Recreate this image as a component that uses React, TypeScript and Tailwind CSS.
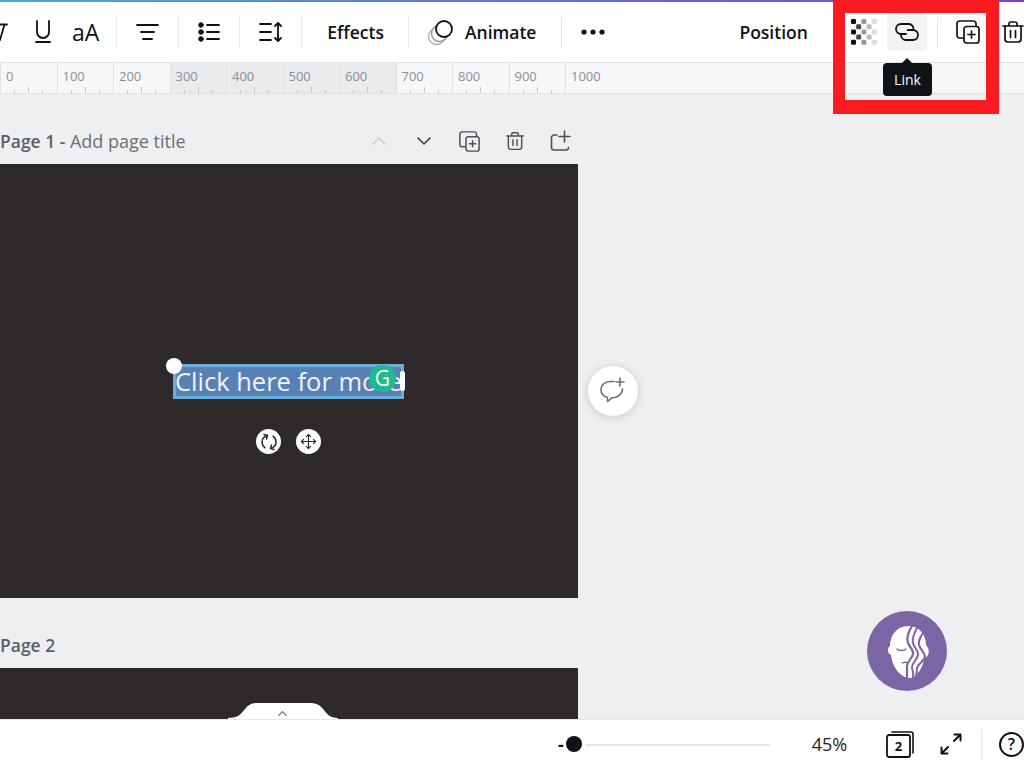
import { ChevronDown, ChevronUp, Move } from 'lucide-react'

const rulerMarks = [0, 100, 200, 300, 400, 500, 600, 700, 800, 900]

function Divider({ className }: { className: string }) {
  return <div className={`h-[31px] w-px shrink-0 bg-[#e6e8ea] ${className}`} />
}

function CopyPlus({ size = 24, color = '#0e1318' }: { size?: number; color?: string }) {
  return (
    <svg width={size} height={size} viewBox="0 0 24 24" fill="none" stroke={color} strokeWidth="1.700" strokeLinecap="round" strokeLinejoin="round">
      <path d="M7 18H3.500A2.500 2.500 0 0 1 1 15.500V3.500A2.500 2.500 0 0 1 3.500 1H17.500A2.500 2.500 0 0 1 20 3.500V6" />
      <rect x="8" y="6.500" width="15" height="16.500" rx="2.500" />
      <path d="M15.500 11v7M12 14.500h7" />
    </svg>
  )
}

function TrashIcon({ size = 24, color = '#0e1318' }: { size?: number; color?: string }) {
  return (
    <svg width={size} height={size} viewBox="0 0 24 24" fill="none" stroke={color} strokeWidth="1.700" strokeLinecap="round" strokeLinejoin="round">
      <path d="M2 6h20M8 6V4a2 2 0 0 1 2-2h4a2 2 0 0 1 2 2v2" />
      <path d="M4 6v13a3 3 0 0 0 3 3h10a3 3 0 0 0 3-3V6" />
      <path d="M9.500 10.500v7M14.500 10.500v7" />
    </svg>
  )
}

function TransparencyIcon() {
  const fills = ['#111', '#444', '#999', '#bbb', '#ddd']
  const dots = []
  for (let row = 0; row < 5; row++) {
    for (let col = 0; col < 5; col++) {
      if ((row + col) % 2 === 0) {
        dots.push(<rect key={`${row}-${col}`} x={col * 5.200} y={row * 5.200} width="5" height="5" rx="1.300" fill={fills[col]} />)
      }
    }
  }
  return <svg className="block" width="26" height="26" viewBox="0 0 26 26">{dots}</svg>
}

function FaceLogo() {
  return (
    <svg className="block" width="80" height="80" viewBox="0 0 80 80">
      <path d="M41 15C30 15 23 24 23 35C20 37 20 42 24 44C25 52 29 62 38 66C42 68 47 67 50 63C54 59 56 54 57 48C61 46 63 41 61 37L59 34C59 23 52 15 41 15Z" fill="#fff" />
      <g fill="none" stroke="#7b65a5" strokeLinecap="round">
        <path d="M46 13C41 22 39 27 41 32C43 37 47 39 46 43C45 48 40 50 40 55L40 68" strokeWidth="2.200" />
        <path d="M51 15C47 22 45 27 46 32C47 37 52 40 51 44C50 49 45 52 45 56C45 59 47 61 46 66" strokeWidth="2" />
        <path d="M56 22C53 27 51 30 52 34C53 38 58 42 58 46C57 50 51 53 50 57C50 59 50 61 49 64" strokeWidth="2" />
        <path d="M30 38C32 40 37 40 39 38" strokeWidth="1.300" />
        <path d="M35 52C37 51 39 51 41 52" strokeWidth="1.300" />
      </g>
    </svg>
  )
}

export default function App() {
  return (
    <div className="relative flex h-[768px] w-[1024px] flex-col overflow-hidden bg-[#edeff1] font-['Open_Sans','Noto_Sans',sans-serif] text-[#0e1318]">
      <div className="h-[2px] shrink-0 bg-gradient-to-r from-[#4fa8cf] via-[#5f73d3] to-[#7d3fd8]" />

      {/* toolbar */}
      <header className="relative z-10 flex h-[60px] shrink-0 items-center bg-white">
        <svg className="shrink-0" width="8" height="18" viewBox="0 0 8 18" fill="none" stroke="#0e1318" strokeWidth="1.800" strokeLinecap="round">
          <path d="M0 1.500h7M4.500 1.500L0 17" />
        </svg>
        <svg className="ml-[27px] shrink-0" width="16" height="24" viewBox="0 0 16 24" fill="none" stroke="#0e1318" strokeWidth="1.800" strokeLinecap="round">
          <path d="M2 1v11a6 6 0 0 0 12 0V1M1 22h14" />
        </svg>
        <span className="ml-[21px] text-[23px] leading-none">aA</span>
        <Divider className="ml-[17px]" />
        <svg className="ml-[19px] shrink-0" width="23" height="18" viewBox="0 0 23 18" stroke="#0e1318" strokeWidth="1.800" strokeLinecap="round">
          <path d="M1 2h21M5 9h13M7 16h9" />
        </svg>
        <Divider className="ml-[19px]" />
        <svg className="ml-[19px] shrink-0" width="22" height="20" viewBox="0 0 22 20" fill="#0e1318" stroke="#0e1318" strokeLinecap="round">
          <circle cx="3" cy="3" r="2.300" />
          <circle cx="3" cy="10" r="2.300" />
          <circle cx="3" cy="17" r="2.300" />
          <path d="M9 3h12M9 10h12M9 17h12" strokeWidth="1.800" />
        </svg>
        <Divider className="ml-[19px]" />
        <svg className="ml-[19px] shrink-0" width="24" height="22" viewBox="0 0 24 22" fill="none" stroke="#0e1318" strokeWidth="1.800" strokeLinecap="round" strokeLinejoin="round">
          <path d="M1 3h11M1 11h11M1 19h11M19 2v18M16 5l3-3 3 3M16 17l3 3 3-3" />
        </svg>
        <Divider className="ml-[18px]" />
        <span className="ml-[25px] text-[17.500px] font-semibold">Effects</span>
        <Divider className="ml-[24px]" />
        <svg className="ml-[18px] shrink-0" width="27" height="27" viewBox="0 0 27 27" fill="none">
          <circle cx="9.500" cy="17.500" r="8" stroke="#b5b5b5" strokeWidth="1.500" />
          <circle cx="12.500" cy="14.500" r="8" fill="#fff" stroke="#999" strokeWidth="1.500" />
          <circle cx="17" cy="10" r="8" fill="#fff" stroke="#0e1318" strokeWidth="1.800" />
        </svg>
        <span className="ml-[11px] text-[17.500px] font-semibold">Animate</span>
        <Divider className="ml-[25px]" />
        <svg className="ml-[19px] shrink-0" width="24" height="6" viewBox="0 0 24 6" fill="#0e1318">
          <circle cx="3" cy="3" r="2.600" />
          <circle cx="12" cy="3" r="2.600" />
          <circle cx="21" cy="3" r="2.600" />
        </svg>
        <span className="ml-[134px] w-[71px] text-[17.500px] font-semibold">Position</span>
        <div className="ml-[43px] shrink-0"><TransparencyIcon /></div>
        <div className="ml-[10px] flex h-[38px] w-[40px] shrink-0 items-center justify-center rounded bg-[#f2f3f5]">
          <svg width="26" height="20" viewBox="0 0 26 20" fill="none" stroke="#0e1318" strokeWidth="1.800" strokeLinecap="round">
            <path d="M19.500 7A5 5 0 0 0 15 2H7A5 5 0 0 0 7 12H12" />
            <path d="M7 13A5 5 0 0 0 11.500 18H19A5 5 0 0 0 19 8H13.500" />
          </svg>
        </div>
        <Divider className="ml-[10px]" />
        <div className="ml-[18px] shrink-0"><CopyPlus /></div>
        <div className="ml-[21px] shrink-0"><TrashIcon /></div>
      </header>

      {/* ruler */}
      <div className="flex h-[32px] shrink-0 border-y border-[#e0e2e4] bg-[#f6f7f8] text-[13px] leading-none text-[#8b9095]">
        {rulerMarks.map((mark) => (
          <div
            key={mark}
            className={`relative w-[56.500px] shrink-0 border-l border-[#dfe1e3] pt-[7px] pl-[5px] ${mark >= 300 && mark <= 600 ? 'bg-[#e9ebed]' : ''}`}
          >
            {mark}
            <div className="absolute right-0 bottom-0 left-0 flex h-[7px] items-end justify-around px-[7px]">
              <span className="h-[3px] w-px bg-[#c4c7ca]" />
              <span className="h-[6px] w-px bg-[#c4c7ca]" />
              <span className="h-[3px] w-px bg-[#c4c7ca]" />
            </div>
          </div>
        ))}
        <div className="flex-1 border-l border-[#dfe1e3] pt-[7px] pl-[5px]">1000</div>
      </div>

      {/* canvas */}
      <main className="relative flex min-h-0 flex-1 flex-col pt-[24px]">
        <div className="flex h-[46px] w-[578px] shrink-0 items-start text-[18px] leading-[46px] text-[#6b7075]">
          <span><span className="text-[17.500px] font-semibold text-[#5c6166]">Page 1 - </span>Add page title</span>
          <div className="ml-auto flex items-center pt-[11px] pr-[7px]">
            <ChevronUp className="h-[24px] w-[24px] text-[#c6c9cc]" strokeWidth={1.5} />
            <ChevronDown className="ml-[21px] h-[24px] w-[24px] text-[#3f4448]" strokeWidth={1.700} />
            <div className="ml-[23px]"><CopyPlus size={21} color="#4c5156" /></div>
            <div className="ml-[25px]"><TrashIcon size={20} color="#4c5156" /></div>
            <svg className="ml-[25px]" width="21" height="22" viewBox="0 0 21 22" fill="none" stroke="#4c5156" strokeWidth="1.600" strokeLinecap="round">
              <path d="M7 5H4a2.500 2.500 0 0 0-2.500 2.500v10A2.500 2.500 0 0 0 4 20h12a2.500 2.500 0 0 0 2.500-2.500M14.500 1v11M9 6.500h11" />
            </svg>
          </div>
        </div>

        <section className="relative h-[434px] w-[578px] shrink-0 bg-[#2e2a2b]">
          <div className="absolute top-[200px] left-[173px] flex h-[35px] w-[231px] items-center overflow-hidden border-[3px] border-[#6aaedb] bg-[#5781b4] indent-[-1px] text-[25.500px] leading-none whitespace-nowrap text-[#eef2f7]">
            Click here for more
          </div>
          <div className="absolute top-[194px] left-[166px] h-[16px] w-[16px] rounded-full bg-white" />
          <div className="absolute top-[207px] left-[400px] h-[20px] w-[5px] rounded-full bg-white" />
          <div className="absolute top-[201px] left-[369px] flex h-[27px] w-[27px] items-center justify-center rounded-full bg-[#1fba8e] text-[21px] leading-none text-white">
            G
          </div>
          <div className="absolute top-[265px] left-[256px] flex h-[25px] w-[25px] items-center justify-center rounded-full bg-white">
            <svg width="18" height="18" viewBox="0 0 18 18" fill="none" stroke="#2e2a2b" strokeWidth="1.500" strokeLinecap="round" strokeLinejoin="round">
              <path d="M7.500 2.500C4 3.500 2 6 2 9c0 2.500 1.300 4.500 3 5.800" />
              <path d="M4 1.500l3.500 1-1 3.500" />
              <path d="M10.500 15.500C14 14.500 16 12 16 9c0-2.500-1.300-4.500-3-5.800" />
              <path d="M14 16.500l-3.500-1 1-3.500" />
            </svg>
          </div>
          <div className="absolute top-[265px] left-[296px] flex h-[25px] w-[25px] items-center justify-center rounded-full bg-white">
            <Move className="h-[17px] w-[17px] text-[#2e2a2b]" strokeWidth={1.600} />
          </div>
        </section>

        <div className="mt-[24px] h-[46px] shrink-0 text-[17.500px] leading-[46px] font-semibold text-[#5c6166]">Page 2</div>
        <section className="min-h-0 w-[578px] flex-1 bg-[#2e2a2b]" />

        <button type="button" aria-label="Add comment" className="absolute top-[272px] left-[588px] flex h-[50px] w-[50px] items-center justify-center rounded-full bg-white shadow-[0_1px_8px_rgba(14,19,24,0.18)]">
          <svg width="28" height="28" viewBox="0 0 28 28" fill="none" stroke="#6a6e72" strokeWidth="1.600" strokeLinecap="round" strokeLinejoin="round">
            <path d="M15 4.500H11C6 4.500 2 8 2 12.500C2 16.500 5 19.500 8.500 20.500V24.500L13 20.800C18 21 23 18 23.500 12" />
            <path d="M21 1v8M17 5h8" />
          </svg>
        </button>

        <div className="absolute top-[517px] left-[867px] h-[80px] w-[80px] overflow-hidden rounded-full bg-[#7b65a5]">
          <FaceLogo />
        </div>

        <div className="absolute bottom-0 left-[228px]">
          <svg className="block" width="110" height="17" viewBox="0 0 110 17">
            <path d="M0 16C10 16 13 12 17 7C20 3 24 1 30 1H82C88 1 92 3 95 7C99 12 102 16 110 16V17H0Z" fill="#fff" />
          </svg>
          <ChevronUp className="absolute top-[4px] left-[47px] h-[15px] w-[15px] text-[#6b7075]" strokeWidth={2} />
        </div>
      </main>

      {/* footer */}
      <footer className="relative flex h-[49px] shrink-0 items-center border-t border-[#e6e8ea] bg-white">
        <span className="ml-[558px] w-[8px] text-[18px] leading-none font-bold">-</span>
        <div className="h-[16px] w-[16px] shrink-0 rounded-full bg-[#0e1318]" />
        <div className="mt-[1px] ml-[3px] h-[2px] w-[185px] shrink-0 bg-[#e3e5e8]" />
        <span className="ml-[42px] w-[40px] text-[18px] leading-none text-[#1f2327]">45%</span>
        <svg className="ml-[36px] shrink-0" width="29" height="28" viewBox="0 0 29 28" fill="none" stroke="#0e1318" strokeLinecap="round">
          <path d="M6 2h19a2 2 0 0 1 2 2v19" strokeWidth="1.600" />
          <rect x="1" y="5" width="23" height="22" rx="2" strokeWidth="1.800" />
          <text x="12.500" y="21" fontSize="13" fontWeight="700" textAnchor="middle" fill="#0e1318" stroke="none">2</text>
        </svg>
        <svg className="ml-[25px] shrink-0" width="22" height="22" viewBox="0 0 22 22" fill="none" stroke="#0e1318" strokeWidth="2" strokeLinecap="round" strokeLinejoin="round">
          <path d="M14 8l6-6M14.500 1.500h6V7.500M8 14l-6 6M1.500 14.500v6h6" />
        </svg>
        <div className="ml-[19px] h-[31px] w-px shrink-0 bg-[#e0e2e4]" />
        <div className="ml-[17px] flex h-[25px] w-[25px] shrink-0 items-center justify-center rounded-full border-2 border-[#0e1318] text-[16px] leading-none font-semibold">?</div>
      </footer>

      {/* tooltip */}
      <div className="absolute top-[63px] left-[883px] z-20 flex h-[33px] w-[49px] items-center justify-center rounded bg-[#0e1318] text-[14px] leading-none text-white">
        <span className="absolute -top-[5px] left-[19px] h-0 w-0 border-x-[5px] border-b-[5px] border-x-transparent border-b-[#0e1318]" />
        Link
      </div>

      {/* annotation */}
      <div className="absolute top-0 left-[833px] z-30 h-[114px] w-[166px] border-t-[13px] border-r-[13px] border-b-[14px] border-l-[12px] border-[#f81b1f]" />
    </div>
  )
}
